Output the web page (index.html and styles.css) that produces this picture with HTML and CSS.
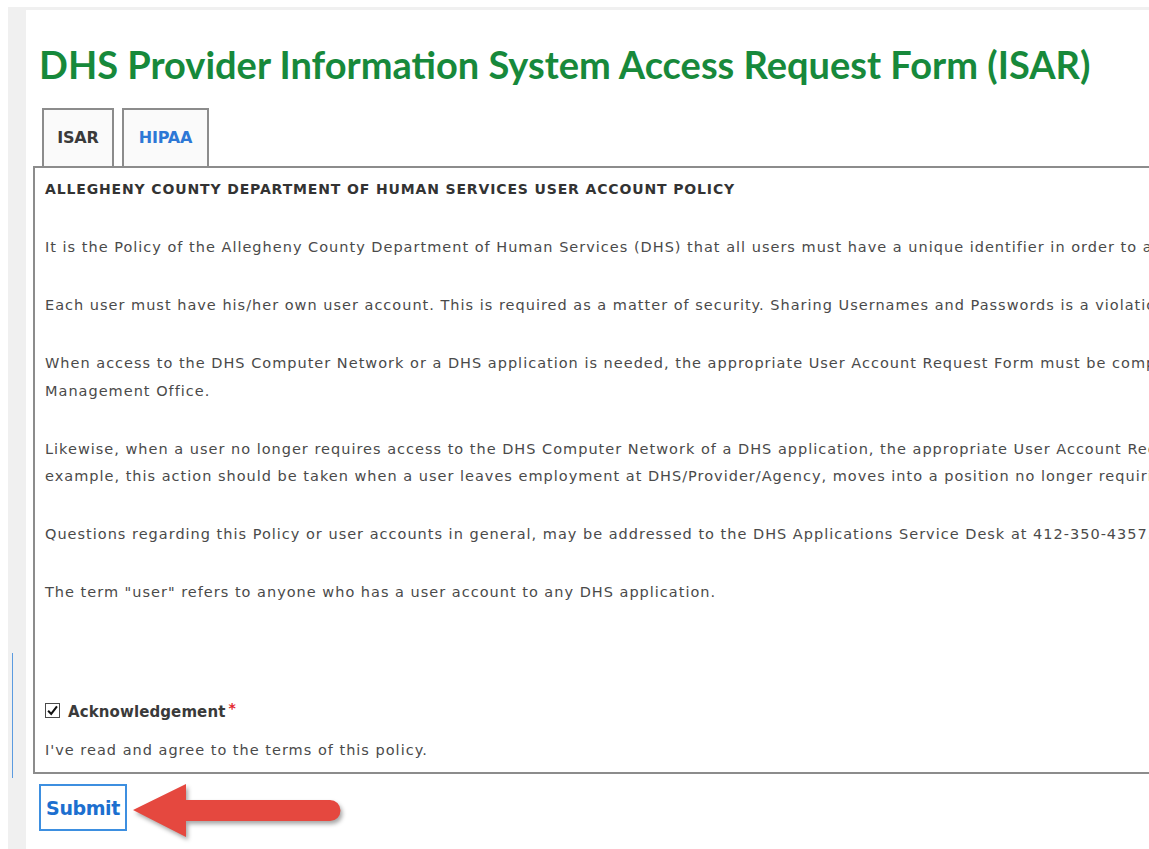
FILE: index.html
```html
<!DOCTYPE html>
<html lang="en">
<head>
<meta charset="utf-8">
<title>DHS Provider Information System Access Request Form (ISAR)</title>
<link rel="stylesheet" href="styles.css">
</head>
<body>
<div class="shell">
  <div class="gutter"><div class="gutter-line"></div></div>
  <main class="page">
    <h1 class="title">DHS Provider Information System Access Request Form (ISAR)</h1>

    <div class="tabs">
      <div class="tab tab-active tab-isar">ISAR</div>
      <div class="tab tab-hipaa">HIPAA</div>
    </div>

    <section class="panel">
      <h2 class="policy-heading">ALLEGHENY COUNTY DEPARTMENT OF HUMAN SERVICES USER ACCOUNT POLICY</h2>
      <p>It is the Policy of the Allegheny County Department of Human Services (DHS) that all users must have a unique identifier in order to access DHS applications.</p>
      <p>Each user must have his/her own user account. This is required as a matter of security. Sharing Usernames and Passwords is a violation of this policy.</p>
      <p>When access to the DHS Computer Network or a DHS application is needed, the appropriate User Account Request Form must be completed and submitted to the DHS Account<br>Management Office.</p>
      <p>Likewise, when a user no longer requires access to the DHS Computer Network of a DHS application, the appropriate User Account Request Form must be submitted. For<br>example, this action should be taken when a user leaves employment at DHS/Provider/Agency, moves into a position no longer requiring access, or similar.</p>
      <p>Questions regarding this Policy or user accounts in general, may be addressed to the DHS Applications Service Desk at 412-350-4357.</p>
      <p class="last">The term "user" refers to anyone who has a user account to any DHS application.</p>

      <label class="ack">
        <span class="check" aria-hidden="true">
          <svg viewBox="0 0 14 14" width="13" height="13"><path d="M2.3 7.2 L5.6 10.6 L11.8 2.6" fill="none" stroke="#111" stroke-width="2.2"/></svg>
        </span>
        <span class="ack-label">Acknowledgement</span><span class="req">*</span>
      </label>
      <p class="ack-text">I've read and agree to the terms of this policy.</p>
    </section>

    <div class="actions">
      <button class="submit" type="button">Submit</button>
      <svg class="pointer" width="220" height="64" viewBox="0 0 220 64">
        <path d="M2 27 L55 1 L55 17 L199 17 A10.5 10.5 0 0 1 199 38 L55 38 L55 54 Z" fill="#e5483f"/>
      </svg>
    </div>
  </main>
</div>
</body>
</html>
```

FILE: styles.css
```css
html, body {
  margin: 0;
  background: #fff;
  overflow: hidden;
}

body {
  font-family: "DejaVu Sans", Verdana, sans-serif;
  color: #4a4a4a;
}

.shell {
  display: flex;
  width: 1800px;
  min-height: 842px;
  margin: 7px 0 0 8px;
  padding-top: 3px;
  background: #f0f0f0;
}

.gutter {
  flex: none;
  width: 18px;
  padding-left: 4px;
  box-sizing: border-box;
}

.gutter-line {
  width: 1px;
  height: 125px;
  margin-top: 643px;
  background: #5b9be0;
}

.page {
  flex: 1;
  background: #fff;
  padding-left: 7px;
}

.title {
  margin: 0 0 0 6px;
  padding-top: 29px;
  font-family: Lato, "Open Sans", sans-serif;
  font-weight: 700;
  font-size: 38px;
  line-height: 50px;
  color: #17893b;
}

.tabs {
  display: flex;
  gap: 8px;
  margin: 19px 0 0 9px;
}

.tab {
  box-sizing: border-box;
  height: 58px;
  padding: 0;
  border: 2px solid #8c8c8c;
  border-bottom: none;
  background: #fafafa;
  font-weight: bold;
  font-size: 16px;
  line-height: 56px;
  text-align: center;
  color: #2d78d6;
  letter-spacing: -0.2px;
}

.tab-isar {
  width: 72px;
}

.tab-hipaa {
  width: 87px;
}

.tab-active {
  color: #3a3a3a;
}

.panel {
  width: 1700px;
  border: 2px solid #8c8c8c;
  padding: 8px 10px 8px;
  font-size: 14.5px;
  line-height: 27.5px;
  letter-spacing: 1px;
}

.policy-heading {
  margin: 0 0 30.5px;
  font-size: 14px;
  line-height: 27.5px;
  font-weight: bold;
  color: #333;
  letter-spacing: 0.86px;
}

.panel p {
  margin: 0 0 30.5px;
  white-space: nowrap;
}

.panel p.last {
  margin-bottom: 92px;
}

.ack {
  display: flex;
  align-items: center;
  height: 28px;
}

.check {
  display: inline-flex;
  align-items: center;
  justify-content: center;
  width: 13px;
  height: 13px;
  border: 1px solid #4a4a4a;
  background: #fff;
  margin: -4px 8px 0 0;
}

.ack-label {
  font-weight: bold;
  font-size: 15px;
  color: #3a3a3a;
  letter-spacing: 0.1px;
}

.req {
  color: #e3262d;
  font-weight: bold;
  font-size: 14px;
  line-height: 14px;
  align-self: flex-start;
  margin-top: 2px;
  margin-left: 3px;
}

.panel p.ack-text {
  margin: 10px 0 0;
}

.actions {
  display: flex;
  align-items: flex-start;
  margin: 10px 0 0 6px;
}

.submit {
  width: 88px;
  height: 47px;
  border: 2px solid #3d8fe0;
  background: #fff;
  font-family: "DejaVu Sans", Verdana, sans-serif;
  font-weight: bold;
  font-size: 19px;
  color: #1c6fcf;
  letter-spacing: -0.4px;
  padding: 0;
}

.pointer {
  margin: -1px 0 0 4px;
  filter: drop-shadow(2px 3px 2px rgba(0, 0, 0, 0.35));
}
```
